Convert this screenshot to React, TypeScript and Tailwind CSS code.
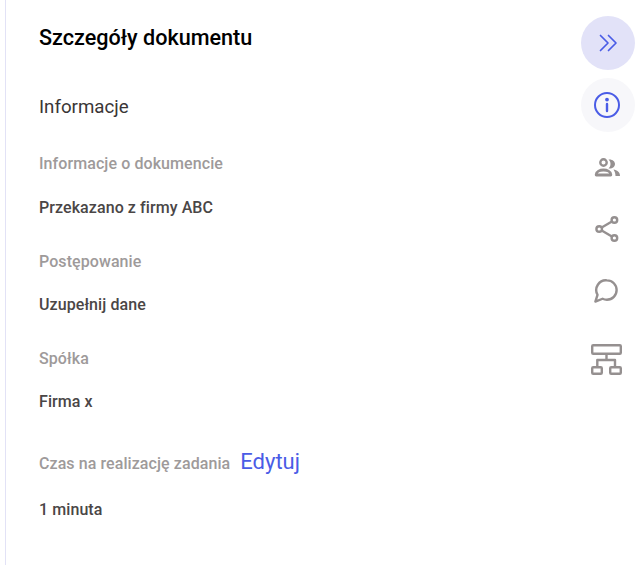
import React from 'react';

const fields = [
  { label: 'Informacje o dokumencie', value: 'Przekazano z firmy ABC', gap: 'mt-[20px]' },
  { label: 'Postępowanie', value: 'Uzupełnij dane', gap: 'mt-[19px]' },
  { label: 'Spółka', value: 'Firma x', gap: 'mt-[19px]' },
];

const Label: React.FC<{ children: React.ReactNode }> = ({ children }) => (
  <span className="text-[16px] leading-[24px] tracking-[0.08px] font-medium text-[#9e9a9a]">{children}</span>
);

const SideButton: React.FC<{ className?: string; children: React.ReactNode }> = ({ className = '', children }) => (
  <button className={`w-[54px] h-[54px] rounded-full flex items-center justify-center ${className}`}>{children}</button>
);

export default function App() {
  return (
    <div className="w-[644px] h-[565px] bg-white overflow-hidden font-['Roboto',sans-serif] flex">
      <div className="ml-[5px] w-[1px] h-full bg-[#e2e2f6]" />
      <main className="w-[575px] pl-[33px] pt-[23px]">
        <h1 className="text-[21.6px] leading-[30px] font-medium text-black">Szczegóły dokumentu</h1>
        <h2 className="mt-[40px] text-[18.72px] leading-[28px] text-[#3a3636]">Informacje</h2>
        <div className="mt-[31px]">
          {fields.map((f) => (
            <div key={f.label} className="mb-[30px]">
              <Label>{f.label}</Label>
              <p className={`${f.gap} text-[16px] leading-[24px] tracking-[0.08px] font-medium text-[#4a4646]`}>{f.value}</p>
            </div>
          ))}
          <div className="flex items-center h-[34px] pt-[2px]">
            <span className="pt-[4px]">
              <Label>Czas na realizację zadania</Label>
            </span>
            <a className="ml-[10px] text-[22px] leading-[32px] text-[#4a5ce6]">Edytuj</a>
          </div>
          <p className="mt-[20px] text-[16px] leading-[24px] tracking-[0.08px] font-medium text-[#4a4646]">1 minuta</p>
        </div>
      </main>
      <aside className="w-[54px] pt-[16px] flex flex-col items-center">
        <SideButton className="bg-[#e2e2f8]">
          <svg width="24" height="24" viewBox="0 0 24 24" fill="none" stroke="#4a5ce6" strokeWidth="1.7" strokeLinecap="round" strokeLinejoin="round">
            <path d="M4.500 4.500 12 12l-7.500 7.500" />
            <path d="M12.500 4.500 20 12l-7.500 7.500" />
          </svg>
        </SideButton>
        <SideButton className="mt-[8px] bg-[#f7f7fa]">
          <svg className="-ml-[2px]" width="30" height="30" viewBox="0 0 30 30" fill="none" stroke="#4a5ce6" strokeWidth="2" strokeLinecap="round">
            <circle cx="15" cy="15" r="12" />
            <path d="M15 14v7" strokeWidth="2.400" />
            <circle cx="15" cy="9.600" r="0.900" fill="#4a5ce6" />
          </svg>
        </SideButton>
        <SideButton className="mt-[8px]">
          <svg width="28" height="22" viewBox="0 0 28 22" fill="none">
            <circle cx="9.500" cy="6.500" r="3.200" stroke="#959090" strokeWidth="2.400" />
            <path d="M2.200 19v-.5c0-3 3.800-4.500 7.300-4.500s7.300 1.500 7.300 4.500v.5z" stroke="#959090" strokeWidth="2.800" strokeLinejoin="round" />
            <path d="M14.500 3.500c4-.5 6.500 2 6.500 4.500s-2.500 5-6.500 4.500c1.300-1.200 2-2.800 2-4.500s-.7-3.300-2-4.500z" fill="#959090" />
            <path d="M19.500 13.500c3.500.5 6.500 2.500 6.500 6.500h-4.500c0-2.500-.8-4.800-2-6.500z" fill="#959090" />
          </svg>
        </SideButton>
        <SideButton className="mt-[8px]">
          <svg width="26" height="28" viewBox="0 0 26 28" fill="none" stroke="#959090" strokeWidth="2.400">
            <circle cx="19.400" cy="5" r="2.800" />
            <circle cx="4.200" cy="14" r="2.800" />
            <circle cx="19.400" cy="23" r="2.800" />
            <path d="M6.700 12.500 16.900 6.500M6.700 15.500l10.200 6" />
          </svg>
        </SideButton>
        <SideButton className="mt-[8px]">
          <svg className="-ml-[4px]" width="24" height="24" viewBox="0 0 26 26" fill="none" stroke="#959090" strokeWidth="2.600" strokeLinejoin="round">
            <path d="M14 1.500c6 0 10.500 4.700 10.500 10.500S20 22.500 14 22.500c-1.700 0-3.300-.4-4.700-1.100L1.500 24.500l2.300-7.400A10.500 10.500 0 0 1 14 1.500z" />
          </svg>
        </SideButton>
        <SideButton className="mt-[14px]">
          <svg className="-ml-[4px]" width="34" height="32" viewBox="0 0 34 32" fill="none" stroke="#959090" strokeWidth="2.400" strokeLinejoin="round">
            <rect x="3.200" y="2.200" width="28.600" height="8.600" rx="1" />
            <rect x="3.200" y="24.200" width="9.600" height="6.600" rx="1" />
            <rect x="21.200" y="24.200" width="10.600" height="6.600" rx="1" />
            <path d="M17.500 11v6M8.300 24v-7h17.700v7" />
          </svg>
        </SideButton>
      </aside>
    </div>
  );
}
